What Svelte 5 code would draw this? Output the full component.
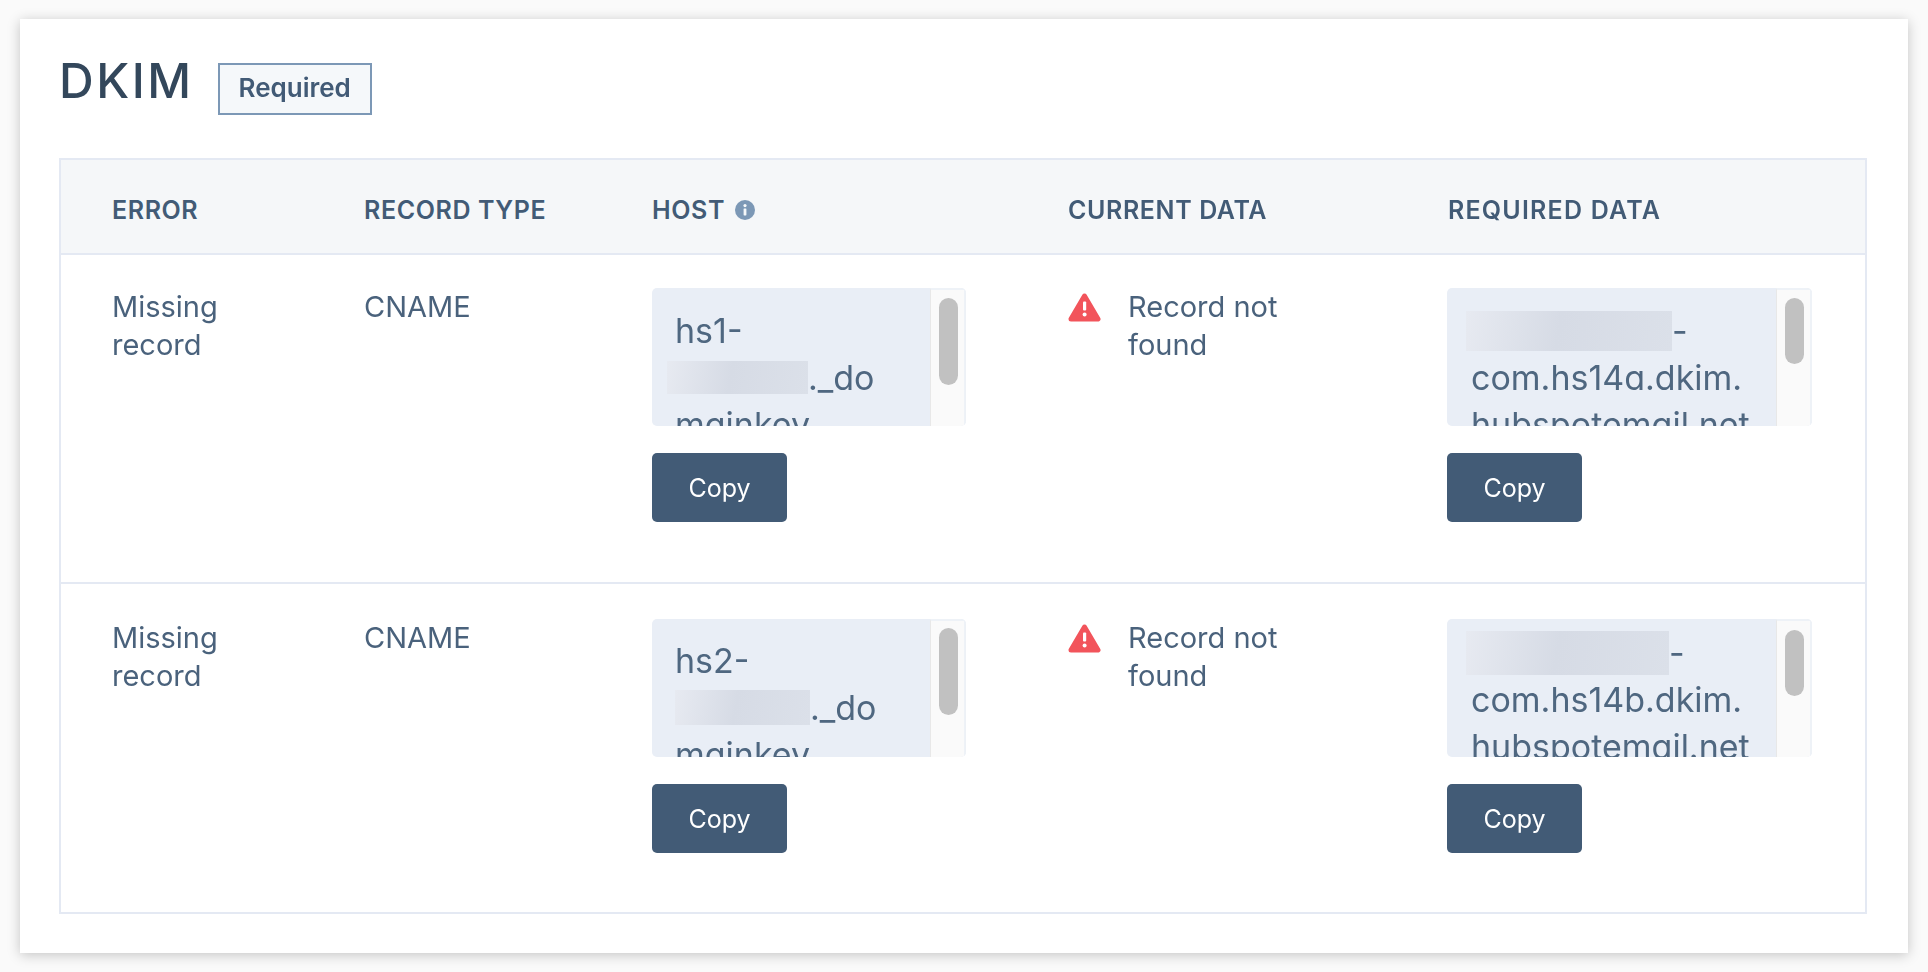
<script>
  const rows = [
    {
      error: ["Missing", "record"],
      type: "CNAME",
      host: { lines: [["hs1-"], [{ w: 141, h: 33, ml: -8 }, "._do"], ["mainkey"]], scroll: 0, thumbTop: 8, thumb: 87 },
      data: { lines: [[{ w: 206, h: 40, ml: -5 }, "-"], ["com.hs14a.dkim."], ["hubspotemail.net"]], scroll: 0, thumbTop: 8, thumb: 66 },
    },
    {
      error: ["Missing", "record"],
      type: "CNAME",
      host: { lines: [["hs2-"], [{ w: 135, h: 35, ml: 0 }, "._do"], ["mainkey"]], scroll: 1, thumbTop: 7, thumb: 87 },
      data: { lines: [[{ w: 203, h: 44, ml: -5 }, "-"], ["com.hs14b.dkim."], ["hubspotemail.net"]], scroll: 9, thumbTop: 9, thumb: 66 },
    },
  ];
</script>

{#snippet codeBox(value, extra)}
  <div class="code {extra}">
    <div class="code-view">
      <div class="code-inner" style="margin-top: {-value.scroll}px">
        {#each value.lines as line}
          <div class="code-line">
            {#each line as part}
              {#if typeof part === "string"}
                {part}
              {:else}
                <span class="redacted" style="width: {part.w}px; height: {part.h}px; margin-left: {part.ml}px"></span>
              {/if}
            {/each}
          </div>
        {/each}
      </div>
    </div>
    <div class="track">
      <div class="thumb" style="margin-top: {value.thumbTop}px; height: {value.thumb}px"></div>
    </div>
  </div>
  <button class="copy">Copy</button>
{/snippet}

<div class="page">
  <section class="card">
    <header class="head">
      <h2>DKIM</h2>
      <span class="tag">Required</span>
    </header>

    <table>
      <colgroup>
        <col class="c1" />
        <col class="c2" />
        <col class="c3" />
        <col class="c4" />
        <col />
      </colgroup>
      <thead>
        <tr>
          <th>Error</th>
          <th>Record type</th>
          <th>
            <span class="host-label">
              Host
              <svg class="info" viewBox="0 0 20 20" width="20" height="20" aria-hidden="true">
                <circle cx="10" cy="10" r="10" fill="#7c98b6" />
                <rect x="8.6" y="8.4" width="2.8" height="7" rx="0.6" fill="#f5f8fa" />
                <circle cx="10" cy="5.6" r="1.6" fill="#f5f8fa" />
              </svg>
            </span>
          </th>
          <th>Current data</th>
          <th>Required data</th>
        </tr>
      </thead>
      <tbody>
        {#each rows as row}
          <tr>
            <td>{row.error[0]}<br />{row.error[1]}</td>
            <td>{row.type}</td>
            <td>{@render codeBox(row.host, "is-host")}</td>
            <td>
              <div class="current">
                <svg class="warn" viewBox="0 0 33 29" width="33" height="29" aria-hidden="true">
                  <path d="M16.5 3 L30 26 H3 Z" fill="#f2545b" stroke="#f2545b" stroke-width="5" stroke-linejoin="round" />
                  <rect x="15" y="8.5" width="3.2" height="9" rx="1" fill="#fff" />
                  <circle cx="16.6" cy="21.5" r="2" fill="#fff" />
                </svg>
                <span>Record not<br />found</span>
              </div>
            </td>
            <td>{@render codeBox(row.data, "is-data")}</td>
          </tr>
        {/each}
      </tbody>
    </table>
  </section>
</div>

<style>
  :global(body) {
    background: #fafafa;
  }

  .page {
    padding: 19px 20px;
    font-family: Inter, "Liberation Sans", sans-serif;
    font-feature-settings: "cv11" 1;
    color: #4a627c;
  }

  .card {
    height: 934px;
    box-sizing: border-box;
    padding: 38px 40px 0 39px;
    background: #fff;
    box-shadow: 0 2px 12px rgba(0, 0, 0, 0.22);
  }

  .head {
    display: flex;
    align-items: flex-start;
    gap: 24px;
    height: 101px;
    filter: blur(0.5px);
  }

  h2 {
    margin: 0;
    font-size: 48px;
    line-height: 48px;
    font-weight: 500;
    letter-spacing: 2.5px;
    color: #33475b;
  }

  .tag {
    margin-top: 6px;
    display: flex;
    align-items: center;
    height: 52px;
    box-sizing: border-box;
    padding: 0 19px 3px;
    background: #f5f8fa;
    border: 2px solid #7c98b6;
    font-size: 26px;
    font-weight: 600;
    color: #425b76;
  }

  table {
    width: 1808px;
    table-layout: fixed;
    border-collapse: separate;
    border-spacing: 0;
    border: 2px solid #e4e9f3;
    filter: blur(0.5px);
  }

  .c1 {
    width: 303px;
  }
  .c2 {
    width: 288px;
  }
  .c3 {
    width: 416px;
  }
  .c4 {
    width: 379px;
  }

  th {
    height: 95px;
    padding: 6px 0 0;
    box-sizing: border-box;
    text-align: left;
    background: #f5f7f9;
    border-bottom: 2px solid #e4e9f3;
    font-size: 25px;
    font-weight: 600;
    letter-spacing: 0.6px;
    text-transform: uppercase;
    color: #425b76;
  }

  th:first-child,
  td:first-child {
    padding-left: 51px;
  }

  th:last-child {
    padding-left: 1px;
    letter-spacing: 1.2px;
  }

  .host-label {
    display: inline-flex;
    align-items: center;
    gap: 10px;
  }

  td {
    height: 329px;
    padding: 33px 0 0;
    vertical-align: top;
    box-sizing: border-box;
    font-size: 29px;
    line-height: 38px;
    border-bottom: 2px solid #e4e9f3;
  }

  tbody tr:last-child td {
    height: 328px;
    border-bottom: 0;
    padding-top: 35px;
  }

  .current {
    display: flex;
    gap: 27px;
  }

  .warn {
    margin-top: 5px;
    flex: none;
  }

  .code {
    display: flex;
    height: 138px;
    overflow: hidden;
    border-radius: 5px;
    background: #e9eef6;
    color: #4f6780;
    font-size: 34px;
    line-height: 47px;
  }

  .is-host {
    width: 314px;
  }
  .is-data {
    width: 365px;
  }

  .code-view {
    flex: 1;
    min-width: 0;
    overflow: hidden;
  }

  .code-inner {
    padding: 19px 0 0 23px;
  }

  .is-data .code-inner {
    padding-left: 24px;
  }

  .code-line {
    white-space: nowrap;
    height: 47px;
    display: flex;
    align-items: center;
  }

  .redacted {
    display: inline-block;
    background: linear-gradient(100deg, #e7eaf1 0%, #d6dbe5 45%, #dbe0e9 100%);
  }

  .track {
    flex: none;
    width: 36px;
    box-sizing: border-box;
    padding-left: 8px;
    background: #fafafa;
    border-left: 1px solid #e8e8e8;
    border-top: 2px solid #eef2f7;
    border-right: 2px solid #eef2f7;
  }

  .thumb {
    width: 19px;
    border-radius: 10px;
    background: #c1c1c1;
  }

  .copy {
    display: block;
    margin-top: 27px;
    width: 135px;
    height: 69px;
    padding: 0;
    border: 0;
    border-radius: 5px;
    background: #425b76;
    color: #fff;
    font: inherit;
    font-size: 25px;
  }
</style>
